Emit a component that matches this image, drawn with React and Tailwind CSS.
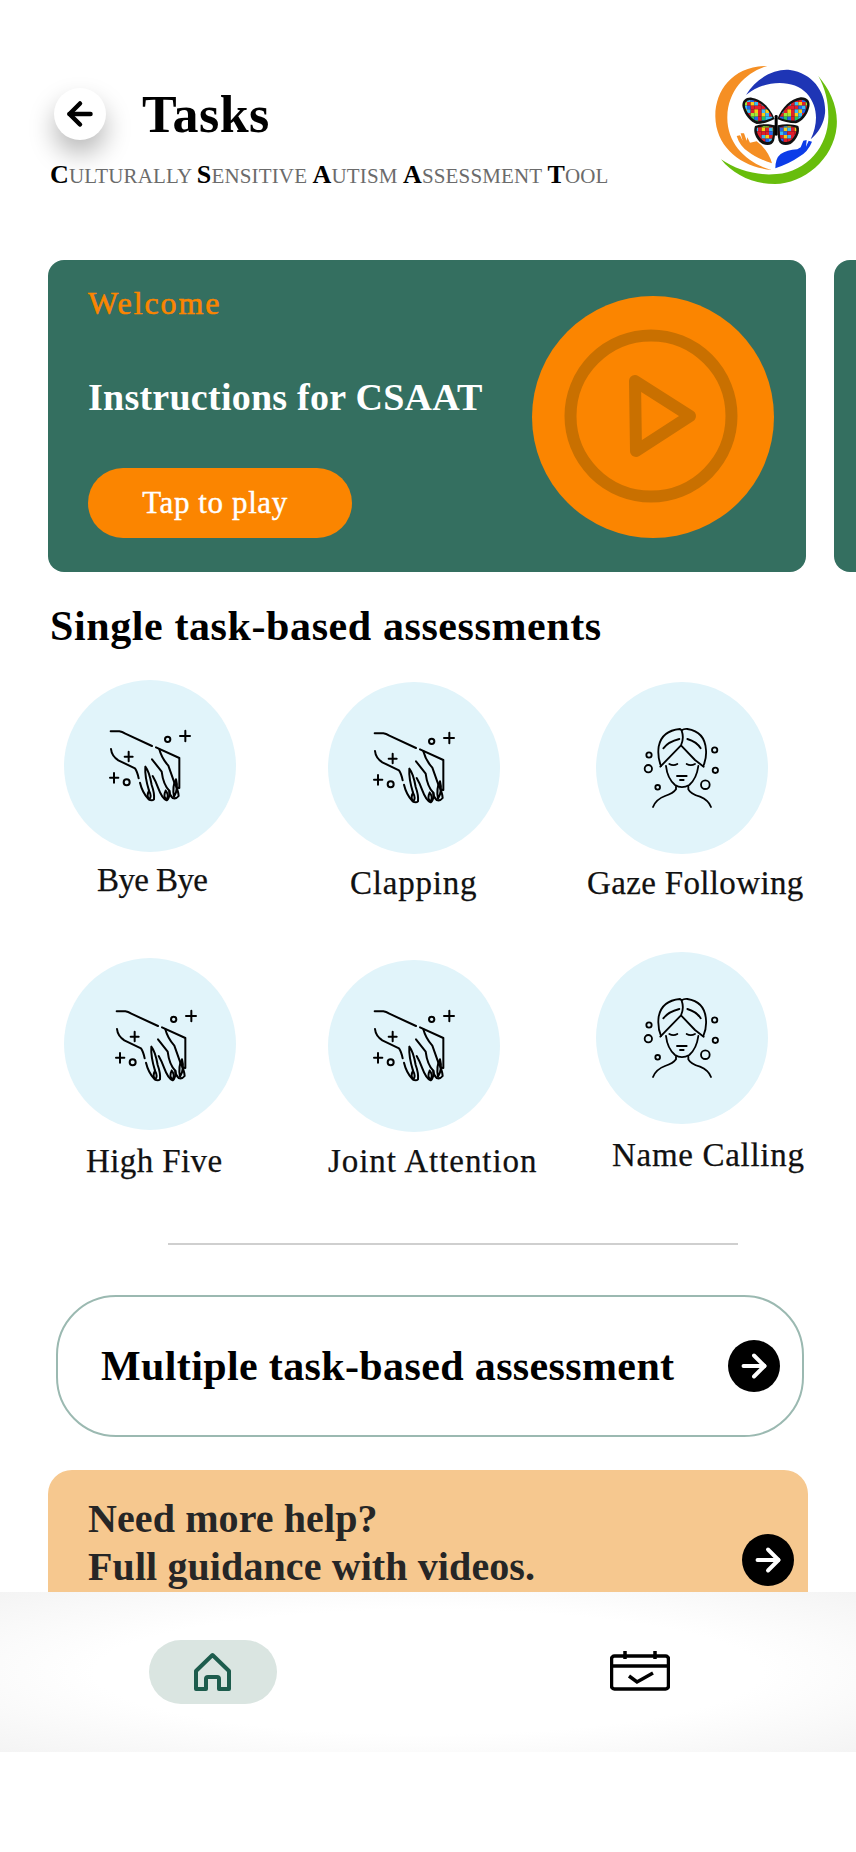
import { ArrowLeft, ArrowRight } from 'lucide-react';

const HandIcon = ({ className = '' }) => (
  <svg viewBox="42 30 516 516" className={`w-full h-full ${className}`} fill="none" stroke="#000" strokeWidth="6" strokeLinecap="round" strokeLinejoin="round">
    <path d="M182 184H208Q216 185 226 191L306 228" />
    <path d="M318 232L388 264V354L380 353" />
    <path d="M183 237Q185 258 205 271L255 295Q262 305 266 325" />
    <path d="M270 338Q277 368 296 388Q306 394 312 388Q314 370 305 345Q298 305 286 290Q284 320 297 362" />
    <path d="M297 362Q288 378 298 388Q306 378 297 362" />
    <path d="M306 268L335 305Q340 345 358 362Q360 385 350 391Q336 385 325 355Q318 335 308 318" />
    <path d="M347 362Q338 380 350 389Q358 375 347 362" />
    <path d="M328 238Q335 265 355 287L372 335Q385 360 386 378Q378 388 368 384Q358 375 358 362" />
    <path d="M378 328Q366 350 372 380Q386 358 378 328" />
    <path d="M406 182V214M390 198H420M236 245V274M224 260H248M192 309V338M180 323H205" />
    <circle cx="353" cy="208" r="8" />
    <circle cx="230" cy="337" r="9" />
  </svg>
);

const FaceIcon = () => (
  <svg viewBox="48 36 516 516" className="w-full h-full" fill="none" stroke="#000" strokeWidth="5.5" strokeLinecap="round" strokeLinejoin="round">
    <path d="M243 288Q232 262 236 230Q245 182 300 177L305 181Q312 176 322 177Q375 185 378 240Q380 265 370 288" />
    <path d="M241 290L303 226L345 270L371 290M305 182Q313 205 303 226" />
    <path d="M250 235Q265 215 298 207M322 207Q350 215 362 235" />
    <path d="M258 288Q262 325 285 345Q305 358 328 345Q350 325 355 288" />
    <path d="M268 282Q280 289 292 282M320 282Q332 289 345 282M291 318H320M300 330H311" />
    <path d="M288 350V358Q280 370 255 378Q228 388 219 411M325 350V358Q332 372 360 380Q385 390 393 411" />
    <circle cx="207" cy="255" r="8" />
    <circle cx="205" cy="296" r="11" />
    <circle cx="233" cy="352" r="7" />
    <circle cx="404" cy="240" r="8" />
    <circle cx="406" cy="301" r="8" />
    <circle cx="376" cy="344" r="13" />
  </svg>
);

// puzzle colours for the butterfly wings
const colours = ['#e11d2a', '#38bdf8', '#facc15', '#22c55e', '#2563eb', '#a3e635', '#facc15', '#e11d2a', '#38bdf8'];
const cells = [];
for (let j = 0; j < 13; j++) {
  for (let i = 0; i < 18; i++) {
    cells.push([160 + i * 11, 145 + j * 11, colours[(i * i + j * 5 + i * j) % 9]]);
  }
}

const upperLeft = 'M254 207C240 172 215 148 185 143C165 141 154 155 158 172C165 198 182 216 200 222C222 222 240 214 254 207Z';
const upperRight = 'M262 207C278 170 300 148 332 142C352 141 362 155 358 170C352 198 335 214 318 220C298 220 278 214 262 207Z';
const lowerLeft = 'M255 226C235 220 210 222 195 228C188 245 198 270 218 282C235 288 248 284 252 272C256 258 256 240 255 226Z';
const lowerRight = 'M263 226C285 220 310 222 325 228C332 245 320 270 302 282C285 288 270 284 266 272C262 258 262 240 263 226Z';

const Logo = () => (
  <svg viewBox="0 0 498 450" className="w-[166px] h-[150px]">
    <defs>
      <clipPath id="wings">
        <path d="M248 203C235 175 212 155 185 150C170 149 162 158 165 170C172 192 186 208 203 214C220 214 235 208 248 203Z" />
        <path d="M268 203C282 175 304 155 332 149C346 149 354 158 351 168C345 192 332 206 316 212C298 212 282 208 268 203Z" />
        <path d="M249 232C232 227 214 229 201 233C198 246 206 264 222 274C234 279 243 276 246 268C249 256 250 244 249 232Z" />
        <path d="M269 232C286 227 304 229 318 233C322 246 314 264 298 274C286 279 275 276 272 268C269 256 269 244 269 232Z" />
      </clipPath>
    </defs>
    <path fill="#f58f24" d="M232 48C130 48 75 120 76 200C78 290 150 350 245 360C170 340 110 280 112 200C114 120 170 65 232 48Z" />
    <path fill="#1e35b5" d="M168 135C200 80 260 55 300 60C370 70 410 130 405 190C402 220 385 250 362 268C385 220 385 170 350 130C310 85 220 90 168 135Z" />
    <path fill="#68bd0c" d="M385 78C420 120 445 170 440 230C430 330 340 400 255 402C190 402 130 375 93 328C140 360 200 378 260 372C350 365 415 290 415 200C415 150 405 115 385 78Z" />
    <path fill="#f58f24" d="M140 258L150 256L158 272L152 250L162 250L170 272L172 262L180 278L200 274Q235 300 246 340Q200 325 175 305Q150 290 140 258Z" />
    <path fill="#0c3ce8" d="M366 275L356 272L348 290L350 270L340 272L332 292L322 298Q290 300 272 312Q256 325 256 355Q300 340 325 322Q355 305 366 275Z" />
    <path fill="#111" d={upperLeft} />
    <path fill="#111" d={upperRight} />
    <path fill="#111" d={lowerLeft} />
    <path fill="#111" d={lowerRight} />
    <g clipPath="url(#wings)">
      {cells.map(([x, y, c]) => (
        <rect key={`${x}-${y}`} x={x} y={y} width="11" height="11" fill={c} />
      ))}
    </g>
    <rect x="254" y="195" width="9" height="62" rx="4" fill="#000" />
  </svg>
);

const BlackArrow = () => (
  <div className="w-[52px] h-[52px] rounded-full bg-black flex items-center justify-center text-white">
    <ArrowRight size={36} strokeWidth={2.6} />
  </div>
);

const Task = ({ label, icon, className, labelClass }) => (
  <div className={`flex flex-col items-start w-[172px] shrink-0 ${className}`}>
    <div className="w-[172px] h-[172px] rounded-full bg-[#e1f4fa] flex">{icon}</div>
    <span className={`text-[33px] leading-[36px] text-[#111] whitespace-nowrap [-webkit-text-stroke:0.25px_currentColor] ${labelClass}`}>{label}</span>
  </div>
);

export default function App() {
  return (
    <div className="w-[856px] h-[1852px] bg-white overflow-hidden font-['Liberation_Serif',serif]">
      <div className="h-[1592px] overflow-hidden">
        {/* header */}
        <div className="flex justify-between pt-[50px] pl-[50px] h-[260px]">
          <div>
            <div className="flex items-center mt-[37px] ml-[4px]">
              <button className="w-[52px] h-[52px] rounded-full bg-white flex items-center justify-center shadow-[0_14px_26px_rgba(0,0,0,0.28)]">
                <ArrowLeft size={36} strokeWidth={3} color="#000" />
              </button>
              <h1 className="ml-[36px] mt-[2px] text-[52px] leading-[52px] font-bold tracking-[0.5px] text-black">Tasks</h1>
            </div>
            <p className="mt-[19px] text-[21px] leading-[30px] tracking-[0.15px] text-[#6b6b6b] whitespace-nowrap">
              <b className="text-[26px] text-black">C</b>ULTURALLY <b className="text-[26px] text-black">S</b>ENSITIVE <b className="text-[26px] text-black">A</b>UTISM <b className="text-[26px] text-black">A</b>SSESSMENT <b className="text-[26px] text-black">T</b>OOL
            </p>
          </div>
          <Logo />
        </div>

        {/* carousel */}
        <div className="flex gap-[28px] pl-[48px] overflow-hidden">
          <div className="relative w-[758px] h-[312px] shrink-0 rounded-[16px] bg-[#346f60] flex justify-between pl-[40px] pr-[32px]">
            <div>
              <p className="mt-[24px] text-[32px] leading-[38px] tracking-[1.9px] text-[#fb8500] [-webkit-text-stroke:0.6px_currentColor]">Welcome</p>
              <p className="mt-[53px] text-[38px] leading-[44px] font-bold text-white tracking-[0.25px] whitespace-nowrap">Instructions for CSAAT</p>
              <button className="mt-[49px] w-[264px] h-[70px] pr-[10px] rounded-[35px] bg-[#fb8500] text-white text-[31px] tracking-[0.6px] [-webkit-text-stroke:0.4px_currentColor]">Tap to play</button>
            </div>
            <div className="absolute right-[32px] top-[36px] w-[242px] h-[242px] rounded-full bg-[#fb8500] flex items-center justify-center pr-[4px] pb-[3px]">
              <svg viewBox="0 0 174 174" className="w-[174px] h-[174px]" fill="none" stroke="#c97000" strokeWidth="12" strokeLinejoin="round">
                <circle cx="87" cy="87" r="80.5" />
                <path d="M71 52L126 87L72 122Z" />
              </svg>
            </div>
          </div>
          <div className="w-[100px] h-[312px] shrink-0 rounded-[16px] bg-[#346f60]" />
        </div>

        {/* single tasks */}
        <h2 className="mt-[31px] ml-[50px] text-[42px] leading-[46px] font-bold text-black tracking-[0.6px] whitespace-nowrap">Single task-based assessments</h2>
        <div className="flex mt-[31px]">
          <Task className="ml-[64px]" labelClass="mt-[10px] ml-[33px] tracking-[-0.6px]" label="Bye Bye" icon={<HandIcon />} />
          <Task className="ml-[92px] mt-[2px]" labelClass="mt-[11px] ml-[22px] tracking-[0.8px]" label="Clapping" icon={<HandIcon />} />
          <Task className="ml-[96px] mt-[2px]" labelClass="mt-[11px] -ml-[9px] tracking-[0.35px]" label="Gaze Following" icon={<FaceIcon />} />
        </div>
        <div className="flex">
          <Task className="ml-[64px] mt-[57px]" labelClass="mt-[13px] ml-[22px] tracking-[0.4px]" label="High Five" icon={<HandIcon className="translate-x-[6px] translate-y-[2px]" />} />
          <Task className="ml-[92px] mt-[59px]" labelClass="mt-[11px] tracking-[0.95px]" label="Joint Attention" icon={<HandIcon />} />
          <Task className="ml-[96px] mt-[51px]" labelClass="mt-[13px] ml-[16px] tracking-[0.7px]" label="Name Calling" icon={<FaceIcon />} />
        </div>

        <div className="ml-[168px] w-[570px] h-[2px] bg-[#cfcfcf] mt-[64px]" />

        {/* multiple */}
        <div className="ml-[56px] mt-[50px] w-[748px] h-[142px] rounded-[60px] border-2 border-[#9bb9b1] flex items-center justify-between pl-[43px] pr-[22px]">
          <span className="text-[42px] font-bold text-black tracking-[0.37px] whitespace-nowrap">Multiple task-based assessment</span>
          <BlackArrow />
        </div>

        {/* help */}
        <div className="ml-[48px] mt-[33px] w-[760px] h-[180px] rounded-[24px] bg-[#f6c88f] flex justify-between pl-[40px] pr-[14px]">
          <p className="mt-[25px] text-[40px] leading-[48px] font-bold text-[#262626] tracking-[0.1px]">Need more help?<br />Full guidance with videos.</p>
          <div className="mt-[64px]"><BlackArrow /></div>
        </div>
      </div>

      {/* bottom nav */}
      <nav className="h-[160px] bg-[radial-gradient(ellipse_at_center,#ffffff_55%,#f4f4f4_100%)] flex items-start">
        <div className="ml-[149px] mt-[48px] w-[128px] h-[64px] rounded-[32px] bg-[#dae5e1] flex items-center justify-center">
          <svg viewBox="0 0 40 40" className="w-[40px] h-[40px]" fill="none" stroke="#1d5c4d" strokeWidth="4" strokeLinejoin="round">
            <path d="M3 37V19L19.5 3L36 19V37H26V27Q26 25 24 25H15Q13 25 13 27V37Z" />
          </svg>
        </div>
        <svg viewBox="0 0 60 40" className="ml-[333px] mt-[59px] w-[60px] h-[40px]" fill="none" stroke="#000" strokeWidth="3.5">
          <rect x="1.5" y="5" width="57" height="33" rx="3" />
          <path d="M1.5 15H58.5M15 0V8M45 0V8" />
          <path d="M19 25L27 31L43 22" />
        </svg>
      </nav>
    </div>
  );
}
